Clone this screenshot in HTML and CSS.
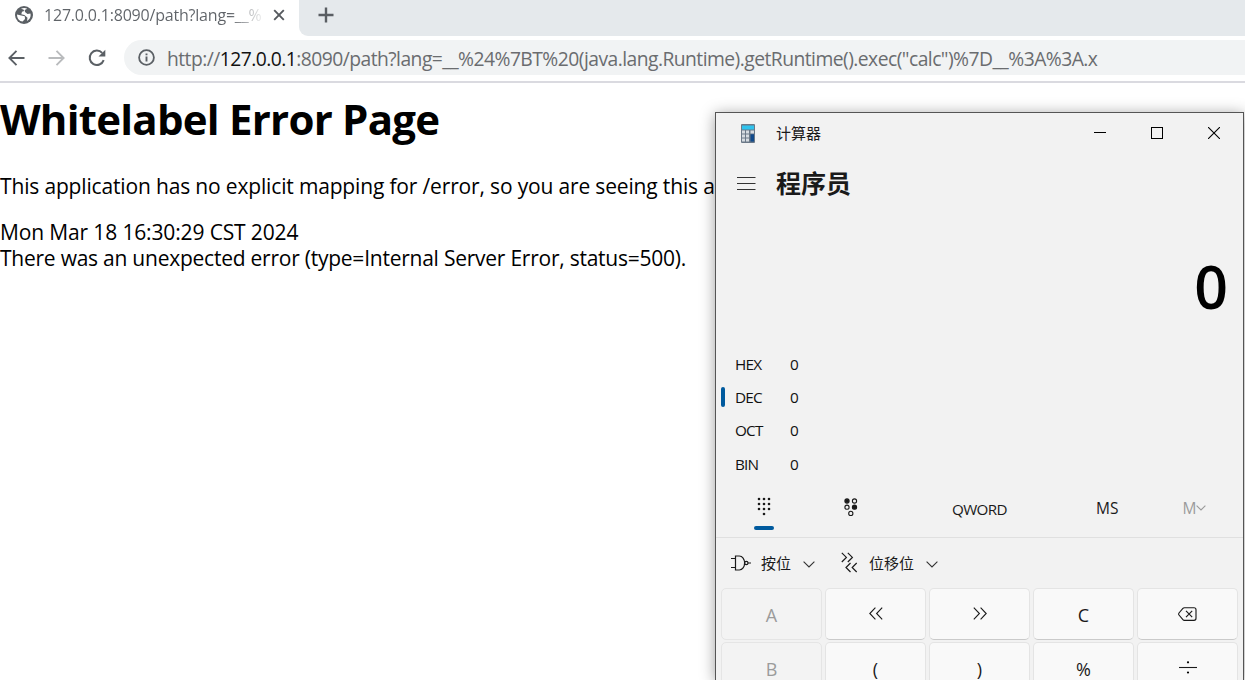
FILE: index.html
```html
<!DOCTYPE html>
<html lang="zh-CN">
<head>
<meta charset="utf-8">
<title>Whitelabel Error Page</title>
<link rel="stylesheet" href="styles.css">
</head>
<body>
<div class="browser">
  <header class="tabstrip">
    <div class="tab">
      <svg class="globe" width="18" height="18" viewBox="0 0 18 18"><circle cx="9" cy="9" r="9" fill="#5b6065"/><path d="M2 8.5L6.3 9.6L9.8 10.3L10 13L7.6 15.6C4.5 15.3 2 12.6 2 8.5ZM6 2.8C8 1.7 10.5 1.7 12.2 2.7L9.7 4.1L10 6L12.5 8L15.4 7.6C16.2 10.5 14.8 13.6 12 15L12.5 11.7L9.4 9L6.3 8.3L7 5.8L9.2 5.1L8.4 3.5Z" fill="#fff"/></svg>
      <span class="tab-title">127.0.0.1:8090/path?lang=__%</span>
      <svg class="tab-close" width="12" height="12" viewBox="0 0 12 12"><path d="M1.2 1.2L10.8 10.8M10.8 1.2L1.2 10.8" stroke="#55595e" stroke-width="1.9"/></svg>
    </div>
    <div class="strip-rest">
      <svg width="16" height="16" viewBox="0 0 16 16"><path d="M8 .5V15.5M.5 8H15.5" stroke="#5a5e63" stroke-width="2.4"/></svg>
    </div>
  </header>
  <nav class="toolbar">
    <svg width="17" height="16" viewBox="0 0 17 16"><path d="M16.5 8H1.8M8.5 .9L1.4 8L8.5 15.1" fill="none" stroke="#5b6065" stroke-width="1.9"/></svg>
    <svg class="forward" width="17" height="16" viewBox="0 0 17 16"><path d="M.5 8H15.2M8.5 .9L15.6 8L8.5 15.1" fill="none" stroke="#b9bbbd" stroke-width="1.9"/></svg>
    <svg class="reload" width="18" height="18" viewBox="0 0 18 18"><path d="M15.7 11.2A7.2 7.2 0 1 1 14.2 3.9" fill="none" stroke="#5b6065" stroke-width="2"/><path d="M17.3 .8V7.6H10.5Z" fill="#5b6065"/></svg>
    <div class="address">
      <svg width="17" height="17" viewBox="0 0 17 17"><circle cx="8.5" cy="8.5" r="7.4" fill="none" stroke="#5b6065" stroke-width="1.8"/><path d="M8.5 7.5V12.6M8.5 4.4V6.2" stroke="#5b6065" stroke-width="1.9"/></svg>
      <span class="url">http://<b>127.0.0.1</b>:8090/path?lang=__%24%7BT%20(java.lang.Runtime).getRuntime().exec("calc")%7D__%3A%3A.x</span>
    </div>
  </nav>
  <main class="page">
    <h1>Whitelabel Error Page</h1>
    <p>This application has no explicit mapping for /error, so you are seeing this a</p>
    <div class="date">Mon Mar 18 16:30:29 CST 2024</div>
    <div>There was an unexpected error (type=Internal Server Error, status=500).</div>
  </main>
</div>

<section class="calc">
  <div class="titlebar">
    <svg class="app-icon" width="14" height="19" viewBox="0 0 14 19"><rect width="14" height="19" rx="1" fill="#6b7988"/><rect x="1" y="1.5" width="12" height="4" fill="#2fc3ee"/><g fill="#d5dbe1"><path d="M1 6.5h3v3h-3zM5 6.5h3v3h-3zM9.5 6.5h3.5v3h-3.5zM1 10.5h3v3h-3zM5 10.5h3v3h-3zM1 14.5h3v3h-3zM5 14.5h3v3h-3z"/></g><path d="M9.5 10.3H13V17.6H9.5Z" fill="#114a8b"/></svg>
    <span class="app-name">计算器</span>
    <div class="controls">
      <svg width="12" height="12" viewBox="0 0 12 12"><path d="M0 5.5H12" stroke="#000"/></svg>
      <svg width="12" height="12" viewBox="0 0 12 12"><rect x=".5" y=".5" width="11" height="11" fill="none" stroke="#000"/></svg>
      <svg width="12" height="12" viewBox="0 0 12 12"><path d="M0 0L12 12M12 0L0 12" stroke="#000" stroke-width="1.1"/></svg>
    </div>
  </div>
  <div class="mode">
    <svg width="19" height="14" viewBox="0 0 19 14"><path d="M0 .5H18.5M0 6.5H18.5M0 12.5H18.5" stroke="#333" stroke-width="1.1"/></svg>
    <span>程序员</span>
  </div>
  <div class="display">0</div>
  <div class="radix">
    <div><i></i><span>HEX</span><em>0</em></div>
    <div class="active"><i></i><span>DEC</span><em>0</em></div>
    <div><i></i><span>OCT</span><em>0</em></div>
    <div><i></i><span>BIN</span><em>0</em></div>
  </div>
  <div class="tools">
    <div class="tool keypad">
      <svg width="14" height="19" viewBox="0 0 14 19" fill="#1a1a1a"><circle cx="2" cy="2" r="1.3"/><circle cx="7" cy="2" r="1.3"/><circle cx="12" cy="2" r="1.3"/><circle cx="2" cy="7" r="1.3"/><circle cx="7" cy="7" r="1.3"/><circle cx="12" cy="7" r="1.3"/><circle cx="2" cy="12" r="1.3"/><circle cx="7" cy="12" r="1.3"/><circle cx="12" cy="12" r="1.3"/><circle cx="7" cy="17" r="1.3"/></svg>
      <i class="underline"></i>
    </div>
    <div class="tool bits">
      <svg width="14" height="19" viewBox="0 0 14 19" fill="none" stroke="#1a1a1a" stroke-width="1.1"><circle cx="3" cy="3" r="2.1" fill="#1a1a1a"/><circle cx="10.5" cy="3" r="2.1"/><circle cx="3" cy="9.2" r="2.1"/><circle cx="10.5" cy="9.2" r="2.1" fill="#1a1a1a"/><circle cx="6.8" cy="15.4" r="2.1"/></svg>
    </div>
    <div class="tool qword">QWORD</div>
    <div class="tool ms">MS</div>
    <div class="tool mem">M<svg width="10" height="6" viewBox="0 0 10 6"><path d="M.6 .6L5 5L9.4 .6" fill="none" stroke="#9b9b9b" stroke-width="1.1"/></svg></div>
  </div>
  <div class="ops">
    <svg class="gate" width="20" height="16" viewBox="0 0 20 16" fill="none" stroke="#1a1a1a" stroke-width="1.2"><path d="M4.5 1H8.3C11.4 1 13.6 4.1 13.6 8S11.4 15 8.3 15H4.5ZM0 3.5H4.5M0 12.5H4.5M17 8H20"/><circle cx="15.3" cy="8" r="1.7"/></svg>
    <span class="op1">按位</span>
    <svg class="chev" width="12" height="7" viewBox="0 0 12 7"><path d="M.6 .6L6 6L11.4 .6" fill="none" stroke="#333" stroke-width="1.1"/></svg>
    <svg class="shift" width="17" height="21" viewBox="0 0 17 21" fill="none" stroke="#1a1a1a" stroke-width="1.2"><path d="M.8 .8L5.4 5.4L.8 10M6.8 .8L11.4 5.4L6.8 10M9.5 11L5 15.5L9.5 20M15.7 11L11.2 15.5L15.7 20"/></svg>
    <span class="op2">位移位</span>
    <svg class="chev" width="12" height="7" viewBox="0 0 12 7"><path d="M.6 .6L6 6L11.4 .6" fill="none" stroke="#333" stroke-width="1.1"/></svg>
  </div>
  <div class="keys">
    <div class="key off">A</div>
    <div class="key sym"><svg width="14" height="13" viewBox="0 0 14 13"><path d="M6.4 .6L.8 6.5L6.4 12.4M13.2 .6L7.6 6.5L13.2 12.4" fill="none" stroke="#1a1a1a" stroke-width="1.1"/></svg></div>
    <div class="key sym"><svg width="14" height="13" viewBox="0 0 14 13"><path d="M.8 .6L6.4 6.5L.8 12.4M7.6 .6L13.2 6.5L7.6 12.4" fill="none" stroke="#1a1a1a" stroke-width="1.1"/></svg></div>
    <div class="key">C</div>
    <div class="key sym"><svg width="19" height="14" viewBox="0 0 19 14" fill="none" stroke="#1a1a1a" stroke-width="1.15"><path d="M6.4 .7H16Q18 .7 18 2.7V11.3Q18 13.3 16 13.3H6.4Q5.5 13.3 4.9 12.6L1 8Q.3 7 1 6L4.9 1.4Q5.5 .7 6.4 .7ZM8 3.9L14.2 10.1M14.2 3.9L8 10.1"/></svg></div>
    <div class="key off">B</div>
    <div class="key">(</div>
    <div class="key">)</div>
    <div class="key">%</div>
    <div class="key sym"><svg width="18" height="13" viewBox="0 0 18 13"><path d="M0 6.5H18" stroke="#1a1a1a" stroke-width="1.1"/><circle cx="9" cy="1.3" r="1.1"/><circle cx="9" cy="11.5" r="1.1"/></svg></div>
  </div>
</section>
</body>
</html>
```

FILE: styles.css
```css
* { box-sizing: border-box; }
html, body { margin: 0; height: 100%; overflow: hidden; }
body {
  position: relative;
  background: #fff;
  color: #000;
  font-family: "Open Sans", "Noto Sans CJK SC", sans-serif;
}
svg { display: block; flex: none; }
i, em { font-style: normal; }

/* browser chrome */
.tabstrip { display: flex; height: 36px; background: #fff; }
.tab { display: flex; align-items: center; width: 299px; padding: 0 0 6px 15px; }
.tab-title {
  width: 218px;
  margin-left: 11px;
  overflow: hidden;
  white-space: nowrap;
  font-size: 16px;
  line-height: 22px;
  letter-spacing: -0.2px;
  background: linear-gradient(90deg, #5f6368 185px, #fff 222px);
  background-clip: text;
  color: transparent;
}
.tab-close { margin-left: 11px; }
.strip-rest {
  flex: 1;
  padding: 7px 0 0 19px;
  background: #e5e9ec;
  border-bottom-left-radius: 9px;
}
.toolbar {
  display: flex;
  align-items: center;
  height: 47px;
  padding: 0 0 2px 8px;
  border-bottom: 2px solid #dadae0;
}
.forward { margin-left: 23px; }
.reload { margin-left: 23px; }
.address {
  display: flex;
  align-items: center;
  flex: 1;
  height: 35px;
  margin-left: 18px;
  padding-left: 14px;
  background: #f1f3f4;
  border-radius: 18px 0 0 18px;
}
.url {
  margin-left: 12px;
  padding-top: 1px;
  white-space: nowrap;
  font-size: 19.3px;
  letter-spacing: -0.54px;
  color: #6a6c6f;
}
.url b { font-weight: 400; color: #111; }

/* page content */
.page { font-size: 21px; line-height: 26px; letter-spacing: -0.24px; white-space: nowrap; }
.page h1 {
  margin: 0;
  padding-top: 8px;
  font-size: 42px;
  line-height: 56px;
  font-weight: 700;
  letter-spacing: -0.76px;
}
.page p { margin: 26px 0 20px; letter-spacing: -0.16px; }
.page .date { letter-spacing: -0.14px; }

/* calculator window */
.calc {
  position: absolute;
  left: 715px;
  top: 112px;
  width: 529px;
  height: 568px;
  overflow: hidden;
  background: #f2f2f2;
  border: 1px solid #555;
  border-bottom: 0;
  box-shadow: 0 2px 14px rgba(0, 0, 0, .38);
  color: #1a1a1a;
}
.titlebar { display: flex; align-items: center; height: 40px; padding: 0 23px 0 25px; }
.app-name { margin-left: 21px; font-size: 15px; line-height: 20px; }
.controls { display: flex; gap: 45px; margin-left: auto; }
.mode { display: flex; align-items: center; height: 61px; padding-left: 21px; }
.mode span { margin: -2px 0 0 20px; font-size: 25px; line-height: 36px; font-weight: 700; }
.display {
  height: 133px;
  padding: 31px 15px 0 0;
  text-align: right;
  font-size: 59px;
  line-height: 82px;
  font-weight: 600;
  color: #000;
}
.radix div { display: flex; align-items: center; height: 33.4px; padding-left: 5px; font-size: 15.3px; color: #111; }
.radix i { width: 4px; height: 20px; margin-right: 10px; border-radius: 2px; }
.radix .active i { background: #005a9e; }
.radix span { width: 55px; letter-spacing: -0.8px; }
.tools { display: flex; height: 57.4px; border-bottom: 1px solid #e0e0e0; font-size: 15.5px; }
.tool { display: flex; align-items: center; justify-content: center; }
.keypad { flex-direction: column; width: 96px; padding-top: 9px; gap: 10px; }
.underline { width: 20px; height: 4px; border-radius: 2px; background: #005a9e; }
.bits { width: 80px; padding-bottom: 3px; }
.qword { width: 180px; font-size: 15.2px; letter-spacing: -0.6px; }
.ms { width: 78px; padding-bottom: 2px; }
.mem { width: 98px; padding-bottom: 2px; color: #9b9b9b; }
.ops { display: flex; align-items: center; height: 50px; padding-left: 15px; font-size: 15px; }
.op1 { margin: 0 12px 1px 10px; }
.op2 { margin: 0 12px 1px 11px; }
.chev { margin-top: 3px; }
.shift { margin-left: 26px; }
.keys { display: grid; grid-template-columns: repeat(5, 101px); grid-auto-rows: 52px; gap: 2px 3px; padding-left: 5px; }
.key {
  display: flex;
  align-items: center;
  justify-content: center;
  padding-top: 3px;
  background: #f9f9f9;
  border: 1px solid #e4e4e4;
  border-bottom: 1.5px solid #cacaca;
  border-radius: 5px;
  font-size: 18px;
}
.key.sym { padding-top: 0; }
.key.off { background: #f3f3f3; border-color: #e5e5e5; color: #9b9b9b; }
```
